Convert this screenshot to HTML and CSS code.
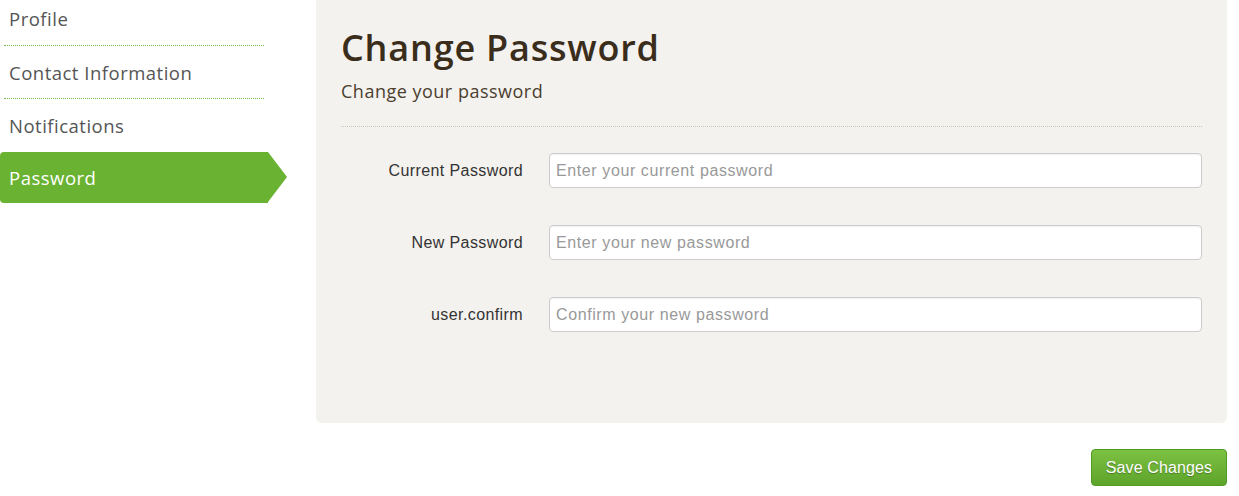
FILE: index.html
```html
<!DOCTYPE html>
<html>
<head>
<meta charset="utf-8">
<link rel="stylesheet" href="styles.css">
</head>
<body>
<div class="page">
  <div class="layout">
    <nav class="sidebar">
      <a class="nav-item">Profile</a>
      <a class="nav-item">Contact Information</a>
      <a class="nav-item">Notifications</a>
      <a class="nav-item active">Password</a>
    </nav>
    <section class="panel">
      <h1 class="title">Change Password</h1>
      <p class="subtitle">Change your password</p>
      <div class="rule"></div>
      <form class="form">
        <div class="row">
          <label class="label">Current Password</label>
          <input class="input" type="password" placeholder="Enter your current password">
        </div>
        <div class="row">
          <label class="label">New Password</label>
          <input class="input" type="password" placeholder="Enter your new password">
        </div>
        <div class="row">
          <label class="label">user.confirm</label>
          <input class="input" type="password" placeholder="Confirm your new password">
        </div>
      </form>
    </section>
  </div>
  <div class="actions">
    <button class="btn-save">Save Changes</button>
  </div>
</div>
</body>
</html>
```
FILE: styles.css
```css
html, body {
  margin: 0;
  padding: 0;
  background: #ffffff;
}
.page {
  width: 1227px;
}
.layout {
  display: flex;
  gap: 28px;
  align-items: flex-start;
}
.sidebar {
  width: 288px;
  display: flex;
  flex-direction: column;
  margin-top: -8px;
  font-family: "Open Sans", Lato, sans-serif;
}
.nav-item {
  display: flex;
  align-items: center;
  height: 53px;
  margin-left: 4px;
  width: 260px;
  padding-left: 5px;
  font-size: 18.5px;
  letter-spacing: 0.5px;
  font-weight: 400;
  color: #555555;
  border-bottom: 1px dotted #7db84a;
  box-sizing: border-box;
}
.nav-item:first-child {
  height: 54px;
}
.nav-item:nth-child(3) {
  border-bottom: none;
}
.nav-item.active {
  position: relative;
  margin-left: 0;
  width: 268px;
  padding-left: 9px;
  height: 51px;
  background: #6ab232;
  color: #ffffff;
  border-bottom: none;
  border-radius: 4px 0 0 4px;
}
.nav-item.active::after {
  content: "";
  position: absolute;
  right: -19px;
  top: 0;
  border-top: 25.5px solid transparent;
  border-bottom: 25.5px solid transparent;
  border-left: 19px solid #6ab232;
}
.panel {
  width: 911px;
  box-sizing: border-box;
  background: #f4f2ee;
  border-radius: 0 0 6px 6px;
  padding: 24px 25px 58px 25px;
  height: 423px;
}
.title {
  margin: 0;
  font-family: "Open Sans", Lato, sans-serif;
  font-weight: 600;
  font-size: 36px;
  letter-spacing: 0.8px;
  line-height: 48px;
  color: #3a2d1c;
}
.subtitle {
  margin: 6px 0 0 0;
  font-family: "Open Sans", Lato, sans-serif;
  font-weight: 400;
  font-size: 18px;
  letter-spacing: 0.5px;
  line-height: 26px;
  color: #4a3e2f;
}
.rule {
  margin-top: 22px;
  border-top: 1px dotted #c9c5bd;
}
.form {
  margin-top: 26px;
  display: flex;
  flex-direction: column;
  gap: 37px;
}
.row {
  display: flex;
  align-items: center;
  gap: 26px;
}
.label {
  width: 182px;
  text-align: right;
  font-family: "Liberation Sans", Arial, sans-serif;
  font-size: 16px;
  letter-spacing: 0.4px;
  color: #333333;
}
.input {
  flex: 1;
  height: 35px;
  box-sizing: border-box;
  border: 1px solid #cccccc;
  border-radius: 4px;
  background: #ffffff;
  padding: 0 6px;
  font-family: "Liberation Sans", Arial, sans-serif;
  font-size: 16px;
  letter-spacing: 0.6px;
  color: #555555;
  box-shadow: inset 0 1px 1px rgba(0,0,0,0.06);
}
.input::placeholder {
  color: #999999;
}
.actions {
  display: flex;
  justify-content: flex-end;
  margin-top: 26px;
}
.btn-save {
  height: 37px;
  padding: 0 14px;
  border: 1px solid #4f9a22;
  border-radius: 4px;
  background: linear-gradient(#7cc142, #5ea42b);
  color: #ffffff;
  font-family: "Liberation Sans", Arial, sans-serif;
  font-size: 16px;
  letter-spacing: 0.1px;
  text-shadow: 0 1px 1px rgba(0,0,0,0.3);
  cursor: pointer;
}
```
